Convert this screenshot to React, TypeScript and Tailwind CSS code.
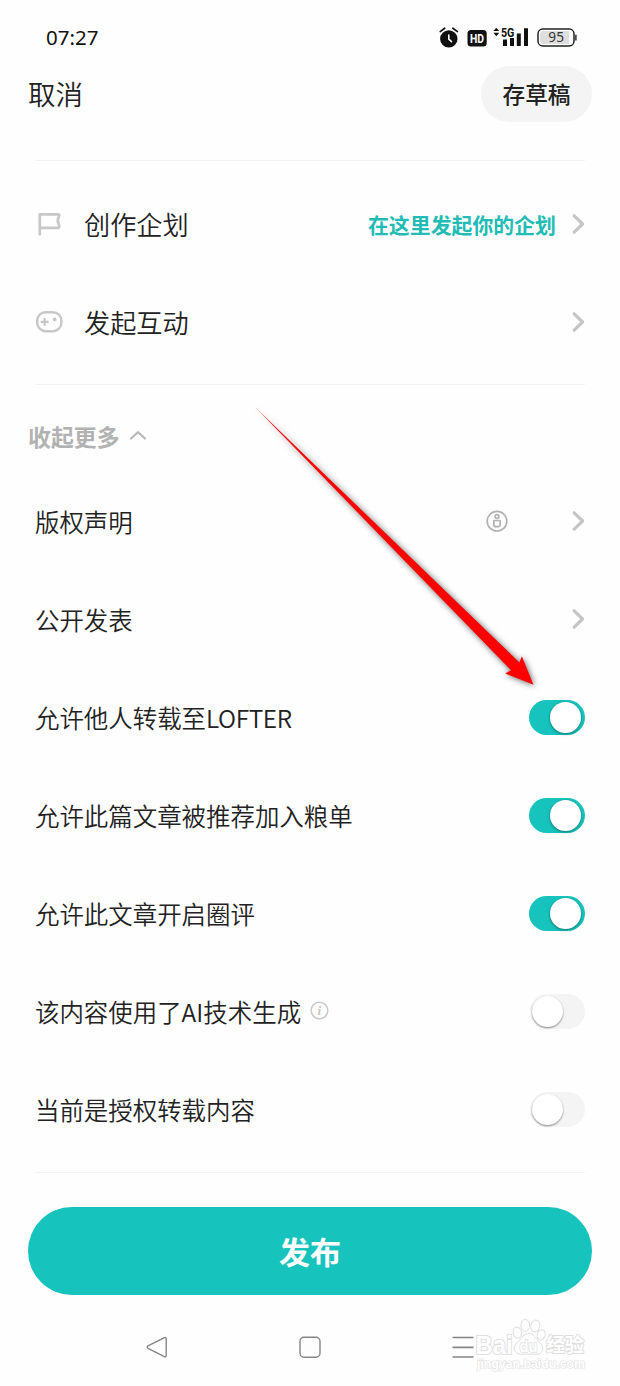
import type { ReactNode } from "react";

function Chevron() {
  return (
    <svg className="h-[22px] w-[14px] shrink-0" viewBox="0 0 14 22" fill="none" stroke="#c6c6c6" strokeWidth="3.2" strokeLinecap="round" strokeLinejoin="round">
      <path d="M3.2 2.8 11.6 11l-8.4 8.2" />
    </svg>
  );
}

function Toggle({ on }: { on: boolean }) {
  return on ? (
    <span className="flex h-[35px] w-14 shrink-0 items-center justify-end rounded-full bg-[#17c3bd] pr-[4px]">
      <span className="size-[31px] rounded-full bg-white shadow-[0_1px_3px_rgba(0,0,0,0.4)]" />
    </span>
  ) : (
    <span className="flex h-[35px] w-[55px] shrink-0 items-center rounded-full bg-[#f4f4f4] pl-[2px]">
      <span className="size-[31px] rounded-full bg-white shadow-[0_1px_2px_rgba(0,0,0,0.45)]" />
    </span>
  );
}

function Row({ label, children }: { label: ReactNode; children: ReactNode }) {
  return (
    <div className="flex h-[98px] items-center justify-between">
      <span className="flex items-center pt-[3px] font-['Noto_Sans_CJK_SC_DemiLight','Noto_Sans_CJK_SC',sans-serif] text-[24.45px] leading-none">{label}</span>
      {children}
    </div>
  );
}

function StatusBar() {
  return (
    <div className="flex h-[66px] items-center justify-between pt-[8px] pr-[43px] pl-[46px]">
      <span className="font-['Noto_Sans','Noto_Sans_CJK_SC',sans-serif] text-[20.5px] leading-none text-[#111]">07:27</span>
      <svg className="h-[24px] w-[138px]" viewBox="439 25 138 24">
        <circle cx="448.8" cy="38.9" r="8.7" fill="#111" />
        <path d="M440.2 31.6l4.5-3.4M457.4 31.6l-4.5-3.4" stroke="#111" strokeWidth="1.7" strokeLinecap="round" />
        <path d="M448.8 35v4.2l2.7 2.4" fill="none" stroke="#fff" strokeWidth="1.6" strokeLinecap="round" />
        <rect x="467.5" y="30" width="19.2" height="16.6" rx="3.5" fill="#111" />
        <text x="470" y="43" fontSize="13" fontWeight="700" fill="#fff" fontFamily="Roboto, sans-serif" textLength="14" lengthAdjust="spacingAndGlyphs">HD</text>
        <path d="M493.4 31.1l2.9-3.4 2.9 3.4zM493.4 32.8l2.9 3.4 2.9-3.4z" fill="#111" />
        <path d="M503 39.5h4V46h-4zM510 38h4v8h-4zM516.8 33.5h4V46h-4zM524 28.2h4V46h-4z" fill="#111" />
        <text x="501" y="36.5" fontSize="13" fontWeight="700" fill="#111" stroke="#fff" strokeWidth="1" paintOrder="stroke" fontFamily="Roboto, sans-serif" textLength="13.4" lengthAdjust="spacingAndGlyphs">5G</text>
        <rect x="538" y="29" width="36" height="17" rx="4.8" fill="#fff" stroke="#222" strokeWidth="1.5" />
        <path d="M543.5 31H569v13h-25.5a3.5 3.5 0 0 1-3.5-3.5v-6a3.5 3.5 0 0 1 3.5-3.5z" fill="#dedede" />
        <path d="M575.9 34.8v5.8" stroke="#222" strokeWidth="1.4" />
        <text x="556.2" y="42.4" textAnchor="middle" fontSize="13.7" fill="#333" fontFamily="Noto Sans, sans-serif">95</text>
      </svg>
    </div>
  );
}

function FlagIcon() {
  return (
    <svg className="h-[26px] w-[28px]" viewBox="0 0 28 26" fill="none" stroke="#c8c8c8" strokeWidth="2.7" strokeLinecap="round" strokeLinejoin="round">
      <path d="M4.8 23.3V3.3H22.8c1.5 0 1.9 1 1.2 2.1-1.6 2.8-1.7 4.8-.5 7.2.8 1.800 1.200 4.300-.6 4.300H4.8" />
    </svg>
  );
}

function GamepadIcon() {
  return (
    <svg className="h-[26px] w-[28px]" viewBox="0 0 28 26" fill="none" stroke="#c8c8c8" strokeWidth="2.5" strokeLinecap="round">
      <rect x="2.2" y="3.2" width="24.2" height="19" rx="8.5" />
      <path d="M6.7 12.9h6M9.7 9.9v6" strokeWidth="2.3" />
      <circle cx="19.7" cy="10.4" r="1.9" fill="#c8c8c8" stroke="none" />
    </svg>
  );
}

function CreditIcon() {
  return (
    <svg className="size-[22px]" viewBox="0 0 22 22" fill="none" stroke="#b2b2b2" strokeWidth="1.7">
      <circle cx="11" cy="11.2" r="9.8" />
      <circle cx="11" cy="6.5" r="1.9" />
      <path d="M7.9 10.5h6.2v4.2a2 2 0 0 1-2 2H9.9a2 2 0 0 1-2-2z" strokeLinejoin="round" />
    </svg>
  );
}

function InfoIcon() {
  return (
    <svg className="-mt-[3px] ml-[9px] size-[19px]" viewBox="0 0 19 19">
      <circle cx="9.5" cy="9.5" r="8.3" fill="none" stroke="#cacaca" strokeWidth="1.5" />
      <text x="9.4" y="13.6" textAnchor="middle" fontFamily="Liberation Serif, serif" fontStyle="italic" fontWeight="700" fontSize="13" fill="#c6c6c6">i</text>
    </svg>
  );
}

function Watermark() {
  return (
    <svg className="absolute top-[1315px] left-[470px] h-[62px] w-[125px]" viewBox="470 1315 125 62" fill="#fff" stroke="#dfdfdf" strokeWidth="1" strokeLinejoin="round">
      <g fontFamily="Liberation Sans, sans-serif" fontWeight="700" paintOrder="stroke" strokeWidth="2">
        <text x="475.5" y="1353.5" fontSize="25" textLength="37" lengthAdjust="spacingAndGlyphs">Bai</text>
        <text x="546" y="1351.5" fontSize="19" fontFamily="Noto Sans CJK SC, sans-serif" textLength="38">经验</text>
        <text x="477" y="1368" fontSize="12" strokeWidth="1.2" stroke="#e0e0e0" textLength="108" lengthAdjust="spacingAndGlyphs">jingyan.baidu.com</text>
      </g>
      <path d="M529 1333.5c4 0 5.5 3 8 6.2s6.3 5.2 5.8 9.2-3.5 5.7-7 5.4-10-.3-13.5 0-7.7-1.2-8-5.2 3-6.2 5.5-9.4 5.2-6.2 9.2-6.2z" />
      <ellipse cx="517.3" cy="1332.5" rx="4.2" ry="5.6" transform="rotate(-14 517.3 1332.5)" />
      <ellipse cx="525.3" cy="1325.3" rx="4.4" ry="6" />
      <ellipse cx="535.3" cy="1326" rx="4.4" ry="6" transform="rotate(14 535.3 1326)" />
      <ellipse cx="541.2" cy="1335" rx="4" ry="5.4" transform="rotate(14 541.2 1335)" />
      <text x="519.5" y="1351.5" fontSize="16" fontWeight="700" fontFamily="Liberation Sans, sans-serif" textLength="18" lengthAdjust="spacingAndGlyphs" strokeWidth="1.6" paintOrder="stroke">du</text>
    </svg>
  );
}

function Arrow() {
  return (
    <svg className="pointer-events-none absolute top-[400px] left-[250px] h-[300px] w-[300px] drop-shadow-[1px_1px_3px_rgba(0,0,0,0.6)]" viewBox="250 400 300 300">
      <path d="M256 408 519.4 662.5 521.9 656.3 533.5 684.8 505.2 673.4 511 670.2z" fill="#fe0000" />
    </svg>
  );
}

const settings = [
  { label: <>允许他人转载至<span className="tracking-[-0.4px]">LOFTER</span></>, id: "repost", on: true },
  { label: "允许此篇文章被推荐加入粮单", id: "list", on: true },
  { label: "允许此文章开启圈评", id: "comments", on: true },
  { label: "该内容使用了AI技术生成", id: "ai", on: false, info: true },
  { label: "当前是授权转载内容", id: "licensed", on: false },
];

export default function App() {
  return (
    <div className="relative flex h-[1386px] w-[620px] flex-col overflow-hidden bg-[#fefefe] font-['Noto_Sans_CJK_SC',sans-serif] text-[#222]">
      <StatusBar />
      <header className="flex h-14 shrink-0 items-center justify-between px-7">
        <button className="font-['Noto_Sans_CJK_SC_DemiLight','Noto_Sans_CJK_SC',sans-serif] text-[27.5px] leading-none">取消</button>
        <button className="h-14 w-[111px] rounded-full bg-[#f4f4f4] text-[22.7px] leading-none font-medium">存草稿</button>
      </header>

      <main className="mx-[35px] mt-[38px] flex flex-col">
        <section className="border-y border-[#f3f3f3] pt-[14px] pb-[13px]">
          <div className="flex h-[98px] items-center">
            <FlagIcon />
            <span className="ml-[21px] font-['Noto_Sans_CJK_SC_DemiLight','Noto_Sans_CJK_SC',sans-serif] text-[26.2px] leading-none">创作企划</span>
            <span className="mr-[15px] ml-auto text-[20.9px] leading-none font-bold text-[#21bcb5]">在这里发起你的企划</span>
            <Chevron />
          </div>
          <div className="flex h-[98px] items-center">
            <GamepadIcon />
            <span className="ml-[21px] font-['Noto_Sans_CJK_SC_DemiLight','Noto_Sans_CJK_SC',sans-serif] text-[26.2px] leading-none">发起互动</span>
            <span className="ml-auto flex"><Chevron /></span>
          </div>
        </section>
        <section className="border-b border-[#f3f3f3] pb-[14px]">
          <button className="-ml-[7px] flex h-[87px] items-center pt-[16px] text-[22.9px] leading-none font-bold text-[#b2b2b2]">
            收起更多
            <svg className="-mt-[4px] ml-[9px] h-[12px] w-[18px]" viewBox="0 0 18 12" fill="none" stroke="#b8b8b8" strokeWidth="2.2">
              <path d="M2 9.5 9 3.3l7 6.2" strokeLinecap="round" />
            </svg>
          </button>
          <Row label="版权声明">
            <span className="flex items-center gap-[63px]">
              <CreditIcon />
              <Chevron />
            </span>
          </Row>
          <Row label="公开发表">
            <Chevron />
          </Row>
          {settings.map((s) => (
            <Row key={s.id} label={<span className="flex items-center"><span>{s.label}</span>{s.info && <InfoIcon />}</span>}>
              <Toggle on={s.on} />
            </Row>
          ))}
        </section>
      </main>

      <button className="mx-7 mt-[34px] h-[88px] shrink-0 rounded-full bg-[#17c3bd] pb-[2px] text-[31px] leading-none font-bold text-white">发布</button>

      <nav className="mt-[40px] flex items-center justify-between px-[145px]">
        <svg className="size-6" viewBox="0 0 24 24" fill="none" stroke="#858585" strokeWidth="1.4" strokeLinejoin="round">
          <path d="M19.4 2.6c1-.5 1.8 0 1.8 1v17c0 1-.8 1.5-1.8 1L3 13.3c-1-.6-1-1.8 0-2.4z" />
        </svg>
        <svg className="size-6" viewBox="0 0 24 24" fill="none" stroke="#858585" strokeWidth="1.4">
          <rect x="2" y="2.3" width="20" height="20" rx="4" />
        </svg>
        <svg className="size-6" viewBox="0 0 24 24" stroke="#858585" strokeWidth="1.7">
          <path d="M1.5 2.5h21M1.5 12.3h21M1.5 22h21" />
        </svg>
      </nav>
      <Arrow />
      <Watermark />
    </div>
  );
}
